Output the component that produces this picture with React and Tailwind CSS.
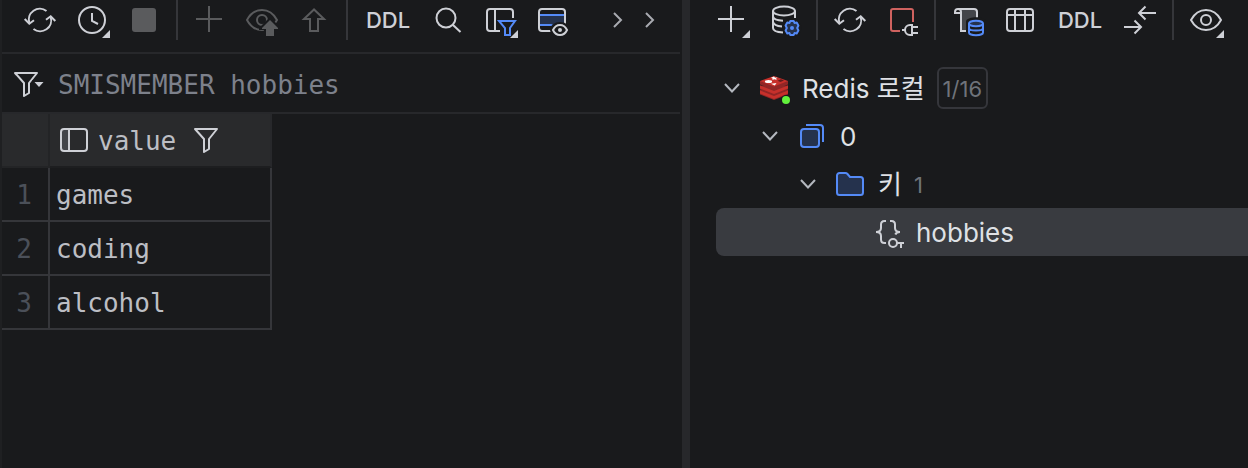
import clsx from 'clsx';

const rows = ['games', 'coding', 'alcohol'];

function Icon({ children, className }) {
  return (
    <svg
      viewBox="0 0 32 32"
      fill="none"
      stroke="currentColor"
      strokeWidth="2"
      aria-hidden="true"
      className={clsx('size-8 shrink-0 overflow-visible', className)}
    >
      {children}
    </svg>
  );
}

// Small corner mark for buttons that open a menu
const MenuMark = () => <path d="M34 26v8h-8z" fill="currentColor" stroke="none" />;

const RefreshIcon = () => (
  <Icon>
    <path d="M22.5 7A11 11 0 0 0 5.3 19" />
    <path d="M.7 15l4.6 4.7 4.7-3.5" />
    <path d="M9.5 25A11 11 0 0 0 26.7 13" />
    <path d="M31.3 17l-4.6-4.7-4.7 3.5" />
  </Icon>
);

const ClockIcon = () => (
  <Icon>
    <circle cx="16" cy="16" r="13" />
    <path d="M16 9v8l6 3" />
    <path d="M36 23v13H23z" fill="#191a1c" stroke="none" />
    <MenuMark />
  </Icon>
);

const StopIcon = () => (
  <Icon>
    <rect x="4" y="4" width="24" height="24" rx="3" fill="currentColor" stroke="none" />
  </Icon>
);

const PlusIcon = ({ menu }) => (
  <Icon>
    <path d="M15 2v26M2 15h26" />
    {menu && <MenuMark />}
  </Icon>
);

const eyePath = 'M1 16C4.500 9.500 10 6 16 6s11.500 3.500 15 10c-3.500 6.500-9 10-15 10S4.500 22.500 1 16z';

const EyeIcon = () => (
  <Icon>
    <path d={eyePath} />
    <circle cx="16" cy="16" r="5" />
    <MenuMark />
  </Icon>
);

const EyeUploadIcon = () => (
  <Icon>
    <path d={eyePath} />
    <circle cx="16" cy="16" r="5" />
    <path d="M24 13L13 24v2h5v8h12v-8h5v-2z" fill="#191a1c" stroke="none" />
    <path d="M24 16l-8 8v1h4v7h8v-7h4v-1z" fill="currentColor" stroke="none" />
  </Icon>
);

const UploadIcon = () => (
  <Icon>
    <path d="M16 5.500L6 15h6v12h8V15h6z" />
  </Icon>
);

const SearchIcon = () => (
  <Icon>
    <circle cx="14" cy="14" r="9.500" />
    <path d="M21 21l7.500 7" />
  </Icon>
);

const TableFilterIcon = () => (
  <Icon>
    <path d="M29 14V8a3 3 0 0 0-3-3H6a3 3 0 0 0-3 3v16a3 3 0 0 0 3 3h10M11 5v22" />
    <path d="M15 17h16l-5 7v7h-5v-7z" stroke="#548af7" />
    <MenuMark />
  </Icon>
);

const TableEyeIcon = () => (
  <Icon>
    <path d="M3 11h26v10H3z" fill="#25324d" stroke="none" />
    <rect x="3" y="5" width="26" height="22" rx="3" />
    <path d="M4 11h24M4 21h24" stroke="#548af7" />
    <ellipse cx="24" cy="26" rx="10" ry="8" fill="#191a1c" stroke="none" />
    <path d="M17 26c1.500-3.300 4-5 7-5s5.500 1.700 7 5c-1.500 3.300-4 5-7 5s-5.500-1.700-7-5z" />
    <circle cx="24" cy="26" r="2" fill="currentColor" stroke="none" />
  </Icon>
);

const ChevronRightIcon = () => (
  <Icon>
    <path d="M14 9l7 7-7 7" />
  </Icon>
);

const ChevronDownIcon = () => (
  <Icon>
    <path d="M9 12l7 7.500 7-7.500" />
  </Icon>
);

const FunnelIcon = ({ menu }) => (
  <Icon>
    <path d="M5 5h22l-8 10v10l-5 3V15z" strokeLinejoin="round" />
    {menu && (
      <>
        <path d="M22 12h15l-7 10z" fill="#191a1c" stroke="none" />
        <path d="M24.500 14h9l-4.500 5z" fill="currentColor" stroke="none" />
      </>
    )}
  </Icon>
);

const DatabaseSettingsIcon = () => (
  <Icon>
    <ellipse cx="16" cy="7" rx="11" ry="4.500" />
    <path d="M27 7v7M5 7v17c0 2.500 4 4.200 10 4.500M5 12.500c.5 2.500 4 4 10 4.200M5 18c.5 2.500 3.500 4 9 4.400" />
    <circle cx="24" cy="24" r="9.500" fill="#191a1c" stroke="none" />
    <path
      d="M22.300 17h3.400l.8 2 2.200-.4 1.700 2.900-1.200 2.500 1.200 2.500-1.700 2.900-2.200-.4-.8 2h-3.400l-.8-2-2.200.4-1.700-2.900 1.200-2.500-1.200-2.500 1.700-2.900 2.200.4z"
      fill="#25324d"
      stroke="#548af7"
      strokeLinejoin="round"
    />
    <circle cx="24" cy="24" r="2" fill="#548af7" stroke="none" />
  </Icon>
);

const DisconnectIcon = () => (
  <Icon>
    <path d="M27 18V7a2 2 0 0 0-2-2H7a2 2 0 0 0-2 2v18a2 2 0 0 0 2 2h7" stroke="#cf625f" />
    <path d="M16 26h3M26 21h-2a5 5 0 0 0 0 10h2zM26 23h6M26 29h6" />
  </Icon>
);

const ScriptDatabaseIcon = () => (
  <Icon>
    <path d="M9 5h13a3 3 0 0 1 3 3v19H9z" fill="#43454a" stroke="none" />
    <path d="M25 14V8a3 3 0 0 0-3-3H6a3 3 0 0 0-3 3v1h6M6 5a3 3 0 0 1 3 3v19h5" />
    <path d="M14 17c2-5 18-5 20 0v17H14z" fill="#191a1c" stroke="none" />
    <g stroke="#548af7">
      <ellipse cx="24" cy="19.500" rx="7" ry="2.800" fill="#25324d" />
      <path d="M17 19.500v9c0 1.500 3 2.800 7 2.800s7-1.300 7-2.800v-9M17 24c0 1.500 3 2.600 7 2.600s7-1.100 7-2.600" />
    </g>
  </Icon>
);

const TableIcon = () => (
  <Icon>
    <rect x="3" y="5" width="26" height="22" rx="3" />
    <path d="M3 11h26M11 5v22M21 5v22" />
  </Icon>
);

const CompareIcon = () => (
  <Icon>
    <path d="M32 9H15M21.500 2.500L15 9l6.500 6.500M0 23h17M10.500 16.500L17 23l-6.500 6.500" />
  </Icon>
);

const ColumnIcon = () => (
  <Icon>
    <path d="M3 5h8v22H3z" fill="#43454a" stroke="none" />
    <rect x="3" y="5" width="26" height="22" rx="3" />
    <path d="M11 5v22" />
  </Icon>
);

const RedisIcon = () => (
  <Icon>
    <g stroke="none">
      <path d="M2 18v4.500l14 5.500 14-5.500V18z" fill="#912626" />
      <path d="M2 18.500L16 24l14-5.500v3L16 27 2 21.500z" fill="#c6302b" />
      <path d="M2 13.500v4L16 23l14-5.500v-4z" fill="#912626" />
      <path d="M2 13.500L16 19l14-5.500v3L16 22 2 16.500z" fill="#c6302b" />
      <path d="M2 9v3.500L16 18l14-5.500V9z" fill="#912626" />
      <path d="M2 9l14-5 14 5-14 5.500z" fill="#c6302b" />
      <path d="M16 4.500l1 1.200 2.500-.2-1.500 1.200.8 1.300-2.300-.7-2.300.7.600-1.300-1.800-1z" fill="#fff" />
      <ellipse cx="10.500" cy="9.500" rx="3.600" ry="1.500" fill="#fff" />
      <path d="M13 11.800l5.500-.8-1.700 2.400z" fill="#fff" />
      <path d="M19.500 8.800l3.500-1.500 3 1.300-3.500 1.400z" fill="#621b1c" />
      <circle cx="28" cy="28" r="5" fill="#191a1c" />
      <circle cx="28" cy="28" r="4" fill="#62f13c" />
    </g>
  </Icon>
);

const SchemaIcon = () => (
  <Icon className="text-[#548af7]">
    <path d="M10 5h14a3 3 0 0 1 3 3v14" />
    <rect x="5" y="9" width="18" height="18" rx="3" fill="#25324d" />
  </Icon>
);

const FolderIcon = () => (
  <Icon className="text-[#548af7]">
    <path
      d="M3 7.500A2.500 2.500 0 0 1 5.500 5h6c.7 0 1.300.3 1.800.8L16 9h10.500A2.500 2.500 0 0 1 29 11.500v13a2.500 2.500 0 0 1-2.500 2.500h-21A2.500 2.500 0 0 1 3 24.500z"
      fill="#25324d"
    />
  </Icon>
);

const KeyValueIcon = () => (
  <Icon className="text-[#ced0d6]">
    <path d="M14 5h-1.500C10 5 9 6.500 9 8.500v3.500c0 2.500-1.500 4-5 4 3.500 0 5 1.500 5 4v3.500c0 2 1 3.500 3.500 3.500H14" />
    <path d="M18 5h1.500C22 5 23 6.500 23 8.500v3.500c0 2.500 1.500 4 5 4-2.500 0-4 .8-4.700 2.500" />
    <circle cx="21" cy="27" r="4" />
    <path d="M25 27h7M29 27v5" />
  </Icon>
);

function ToolButton({ label, disabled, className, children }) {
  return (
    <button
      type="button"
      aria-label={label}
      disabled={disabled}
      className={clsx('shrink-0', disabled ? 'text-[#5a5b5d]' : 'text-[#ced0d6]', className)}
    >
      {children}
    </button>
  );
}

function DdlButton() {
  return (
    <button type="button" className="w-12 shrink-0 text-center text-[22px] font-medium leading-8 text-[#ced0d6]">
      DDL
    </button>
  );
}

const Group = ({ children }) => <div className="flex items-center gap-5">{children}</div>;
const Separator = () => <div className="w-0.5 shrink-0 self-stretch bg-[#35363a]" />;

function ResultPanel() {
  return (
    <section className="min-w-0 border-l-2 border-[#1f2022]">
      <div className="mr-0.5 flex border-b-2 border-[#27282b] pb-3 pl-[22px]">
        <div className="flex h-10 items-center gap-4">
          <Group>
            <ToolButton label="Refresh"><RefreshIcon /></ToolButton>
            <ToolButton label="History"><ClockIcon /></ToolButton>
            <ToolButton label="Stop" disabled><StopIcon /></ToolButton>
          </Group>
          <Separator />
          <Group>
            <ToolButton label="Add row" disabled><PlusIcon /></ToolButton>
            <ToolButton label="Preview changes" disabled><EyeUploadIcon /></ToolButton>
            <ToolButton label="Submit" disabled><UploadIcon /></ToolButton>
          </Group>
          <Separator />
          <Group>
            <DdlButton />
            <ToolButton label="Search"><SearchIcon /></ToolButton>
            <ToolButton label="Filter columns"><TableFilterIcon /></ToolButton>
            <ToolButton label="View options"><TableEyeIcon /></ToolButton>
          </Group>
        </div>
        <div className="ml-auto flex h-10 items-center pr-4 text-[#a8aab0]">
          <button type="button" aria-label="More actions"><ChevronRightIcon /></button>
          <button type="button" aria-label="Expand toolbar"><ChevronRightIcon /></button>
        </div>
      </div>

      <div className="mr-0.5 flex h-[60px] items-center gap-4 border-b-2 border-[#27282b] pl-2 pt-0.5">
        <ToolButton label="Filter history"><FunnelIcon menu /></ToolButton>
        <input
          aria-label="Filter"
          defaultValue="SMISMEMBER hobbies"
          spellCheck={false}
          className="min-w-0 flex-1 bg-transparent pt-0.5 font-['DejaVu_Sans_Mono',monospace] text-[26px] leading-8 text-[#7d818b] outline-none"
        />
      </div>

      <table className="border-separate border-spacing-0 font-['DejaVu_Sans_Mono',monospace] text-[26px] leading-8 text-[#bcbec4]">
        <thead>
          <tr className="h-[54px] bg-[#292a2c]">
            <th className="w-12 border-b-2 border-r-2 border-[#232426] p-0" aria-label="Row" />
            <th className="w-[222px] border-b-2 border-r-2 border-b-[#1d1e20] border-r-[#27282b] py-0 pl-2 pr-0 font-normal">
              <div className="flex items-center gap-2">
                <span className="text-[#ced0d6]"><ColumnIcon /></span>
                <span className="pt-0.5">value</span>
                <ToolButton label="Filter value" className="ml-1.5"><FunnelIcon /></ToolButton>
              </div>
            </th>
          </tr>
        </thead>
        <tbody>
          {rows.map((value, i) => (
            <tr key={value} className="h-[54px]">
              <td className="border-b-2 border-r-2 border-[#35363a] pb-0 pl-0 pr-4 pt-0.5 text-right text-[#4b5059]">{i + 1}</td>
              <td className="border-b-2 border-r-2 border-[#35363a] px-1.5 pb-0 pt-0.5">{value}</td>
            </tr>
          ))}
        </tbody>
      </table>
    </section>
  );
}

function TreeRow({ icon, label, indent, leaf, selected, children }) {
  return (
    <li
      role="treeitem"
      aria-selected={!!selected}
      className={clsx('flex h-12 items-center rounded-l-lg', indent, selected && 'bg-[#393b40]')}
    >
      {leaf ? (
        <span className="w-8" />
      ) : (
        <button type="button" aria-label={`Collapse ${label}`} className="text-[#b4b8bf]"><ChevronDownIcon /></button>
      )}
      <span className="ml-2.5 mr-3">{icon}</span>
      <span className="pt-0.5">{label}</span>
      {children}
    </li>
  );
}

function DatabasePanel() {
  return (
    <section className="min-w-0 pl-[26px]">
      <div className="flex h-10 items-center gap-4">
        <Group>
          <ToolButton label="New"><PlusIcon menu /></ToolButton>
          <ToolButton label="Data source properties"><DatabaseSettingsIcon /></ToolButton>
        </Group>
        <Separator />
        <Group>
          <ToolButton label="Refresh"><RefreshIcon /></ToolButton>
          <ToolButton label="Disconnect"><DisconnectIcon /></ToolButton>
        </Group>
        <Separator />
        <Group>
          <ToolButton label="Jump to console"><ScriptDatabaseIcon /></ToolButton>
          <ToolButton label="Open table"><TableIcon /></ToolButton>
          <DdlButton />
          <ToolButton label="Compare"><CompareIcon /></ToolButton>
        </Group>
        <Separator />
        <ToolButton label="View"><EyeIcon /></ToolButton>
      </div>

      <ul role="tree" className="mt-6 text-[26px] leading-8 text-[#dfe1e5]">
        <TreeRow icon={<RedisIcon />} label="Redis 로컬">
          <button type="button" className="ml-3 h-[42px] rounded-md border-2 border-[#35363b] px-1 pt-0.5 text-[22px] text-[#6f737a]">
            1/16
          </button>
        </TreeRow>
        <TreeRow icon={<SchemaIcon />} label="0" indent="pl-[38px]" />
        <TreeRow icon={<FolderIcon />} label="키" indent="pl-[76px]">
          <span className="ml-3 pt-0.5 text-[22px] text-[#6f737a]">1</span>
        </TreeRow>
        <TreeRow icon={<KeyValueIcon />} label="hobbies" indent="pl-[114px]" leaf selected />
      </ul>
    </section>
  );
}

export default function App() {
  return (
    <main className="grid min-h-screen grid-cols-[682fr_8px_558fr] overflow-hidden bg-[#191a1c] font-[Inter,'Noto_Sans_CJK_KR',sans-serif]">
      <ResultPanel />
      <div className="bg-[#27282b]" />
      <DatabasePanel />
    </main>
  );
}
